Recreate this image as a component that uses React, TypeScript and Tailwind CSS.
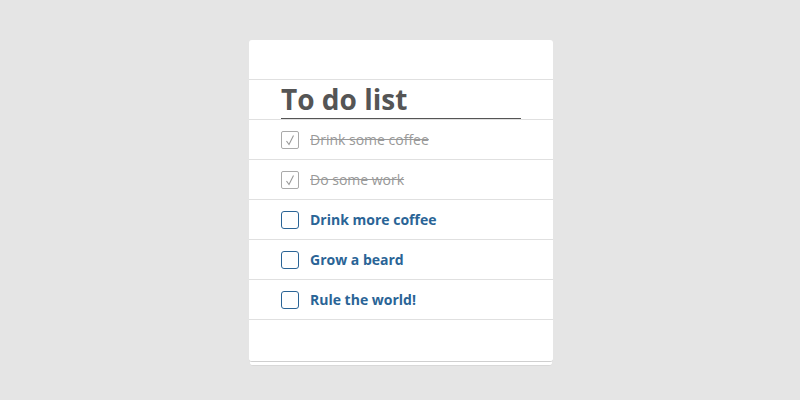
import React from "react";

const items = [
    { text: "Drink some coffee", done: true },
    { text: "Do some work", done: true },
    { text: "Drink more coffee", done: false },
    { text: "Grow a beard", done: false },
    { text: "Rule the world!", done: false },
];

export default function App() {
    return (
        <div
            className="w-[800px] h-[400px] bg-[#e5e5e5] flex justify-center pt-[40px]"
            style={{ fontFamily: '"Open Sans", sans-serif' }}
        >
            <div className="relative w-[304px] h-[320px] ml-[2px]">
                {/* stacked pages underneath */}
                <div className="absolute left-[1px] right-[1px] top-[6px] h-[320px] bg-white rounded-[3px] border-b border-[#d8d8d8]" />
                <div className="absolute left-0 right-0 top-[2px] h-[320px] bg-white rounded-[3px] border-b border-[#cfcfcf]" />
                <div className="relative bg-white rounded-[3px] h-[320px] flex flex-col">
                    <div className="h-[40px] border-b border-[#e0e0e0]" />
                    <div className="h-[40px] border-b border-[#e0e0e0] px-[32px]">
                        <div className="h-[39px] border-b border-[#555] flex items-end">
                            <span className="text-[28px] leading-[38px] font-bold text-[#555]">To do list</span>
                        </div>
                    </div>
                    {items.map((item) => (
                        <div
                            key={item.text}
                            className="h-[40px] border-b border-[#e0e0e0] flex items-center pl-[32px] gap-[11px]"
                        >
                            {item.done ? (
                                <div className="w-[18px] h-[18px] border border-[#aaa] rounded-[2px] flex items-center justify-center">
                                    <svg width="14" height="14" viewBox="0 0 14 14" fill="none">
                                        <polyline points="3.5,8 6,11.5 10.5,2.5" stroke="#999" strokeWidth="1.1" />
                                    </svg>
                                </div>
                            ) : (
                                <div className="w-[18px] h-[18px] border-[1.5px] border-[#2a6496] rounded-[3px]" />
                            )}
                            <span
                                className={
                                    item.done
                                        ? "text-[14px] font-normal text-[#999] line-through"
                                        : "text-[14px] font-bold text-[#2a6496]"
                                }
                            >
                                {item.text}
                            </span>
                        </div>
                    ))}
                    <div className="h-[40px]" />
                </div>
            </div>
        </div>
    );
}
